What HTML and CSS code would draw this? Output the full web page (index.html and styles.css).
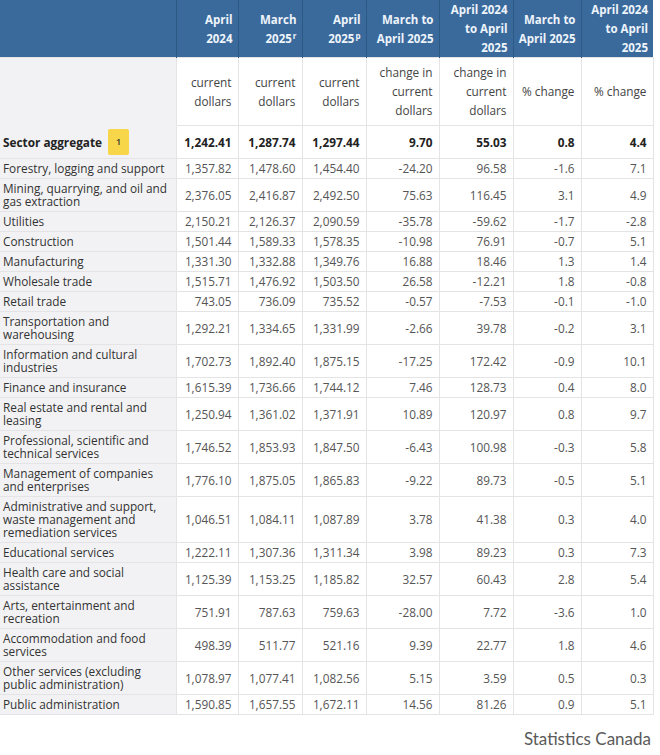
FILE: index.html
```html
<!DOCTYPE html>
<html>
<head>
<meta charset="utf-8">
<link rel="stylesheet" href="styles.css">
</head>
<body>
<table class="data">
  <colgroup>
    <col class="c-label"><col class="c1"><col class="c2"><col class="c3"><col class="c4"><col class="c5"><col class="c6"><col class="c7">
  </colgroup>
  <thead>
    <tr class="head">
      <th class="blank"></th>
      <th>April<br>2024</th>
      <th>March<br>2025<sup>r</sup></th>
      <th>April<br>2025<sup>p</sup></th>
      <th>March to<br>April 2025</th>
      <th>April 2024<br>to April<br>2025</th>
      <th>March to<br>April 2025</th>
      <th>April 2024<br>to April<br>2025</th>
    </tr>
    <tr class="units">
      <td class="label"></td>
      <td>current<br>dollars</td>
      <td>current<br>dollars</td>
      <td>current<br>dollars</td>
      <td>change in<br>current<br>dollars</td>
      <td>change in<br>current<br>dollars</td>
      <td>% change</td>
      <td>% change</td>
    </tr>
  </thead>
  <tbody>
    <tr class="agg">
      <td class="label"><span class="agg-name">Sector aggregate</span><span class="note">1</span></td>
      <td>1,242.41</td><td>1,287.74</td><td>1,297.44</td><td>9.70</td><td>55.03</td><td>0.8</td><td>4.4</td>
    </tr>
    <tr><td class="label">Forestry, logging and support</td><td>1,357.82</td><td>1,478.60</td><td>1,454.40</td><td>-24.20</td><td>96.58</td><td>-1.6</td><td>7.1</td></tr>
    <tr><td class="label">Mining, quarrying, and oil and gas extraction</td><td>2,376.05</td><td>2,416.87</td><td>2,492.50</td><td>75.63</td><td>116.45</td><td>3.1</td><td>4.9</td></tr>
    <tr><td class="label">Utilities</td><td>2,150.21</td><td>2,126.37</td><td>2,090.59</td><td>-35.78</td><td>-59.62</td><td>-1.7</td><td>-2.8</td></tr>
    <tr><td class="label">Construction</td><td>1,501.44</td><td>1,589.33</td><td>1,578.35</td><td>-10.98</td><td>76.91</td><td>-0.7</td><td>5.1</td></tr>
    <tr><td class="label">Manufacturing</td><td>1,331.30</td><td>1,332.88</td><td>1,349.76</td><td>16.88</td><td>18.46</td><td>1.3</td><td>1.4</td></tr>
    <tr><td class="label">Wholesale trade</td><td>1,515.71</td><td>1,476.92</td><td>1,503.50</td><td>26.58</td><td>-12.21</td><td>1.8</td><td>-0.8</td></tr>
    <tr><td class="label">Retail trade</td><td>743.05</td><td>736.09</td><td>735.52</td><td>-0.57</td><td>-7.53</td><td>-0.1</td><td>-1.0</td></tr>
    <tr><td class="label">Transportation and warehousing</td><td>1,292.21</td><td>1,334.65</td><td>1,331.99</td><td>-2.66</td><td>39.78</td><td>-0.2</td><td>3.1</td></tr>
    <tr><td class="label">Information and cultural industries</td><td>1,702.73</td><td>1,892.40</td><td>1,875.15</td><td>-17.25</td><td>172.42</td><td>-0.9</td><td>10.1</td></tr>
    <tr><td class="label">Finance and insurance</td><td>1,615.39</td><td>1,736.66</td><td>1,744.12</td><td>7.46</td><td>128.73</td><td>0.4</td><td>8.0</td></tr>
    <tr><td class="label">Real estate and rental and leasing</td><td>1,250.94</td><td>1,361.02</td><td>1,371.91</td><td>10.89</td><td>120.97</td><td>0.8</td><td>9.7</td></tr>
    <tr><td class="label">Professional, scientific and technical services</td><td>1,746.52</td><td>1,853.93</td><td>1,847.50</td><td>-6.43</td><td>100.98</td><td>-0.3</td><td>5.8</td></tr>
    <tr><td class="label">Management of companies and enterprises</td><td>1,776.10</td><td>1,875.05</td><td>1,865.83</td><td>-9.22</td><td>89.73</td><td>-0.5</td><td>5.1</td></tr>
    <tr><td class="label">Administrative and support, waste management and remediation services</td><td>1,046.51</td><td>1,084.11</td><td>1,087.89</td><td>3.78</td><td>41.38</td><td>0.3</td><td>4.0</td></tr>
    <tr><td class="label">Educational services</td><td>1,222.11</td><td>1,307.36</td><td>1,311.34</td><td>3.98</td><td>89.23</td><td>0.3</td><td>7.3</td></tr>
    <tr><td class="label">Health care and social assistance</td><td>1,125.39</td><td>1,153.25</td><td>1,185.82</td><td>32.57</td><td>60.43</td><td>2.8</td><td>5.4</td></tr>
    <tr><td class="label">Arts, entertainment and recreation</td><td>751.91</td><td>787.63</td><td>759.63</td><td>-28.00</td><td>7.72</td><td>-3.6</td><td>1.0</td></tr>
    <tr><td class="label">Accommodation and food services</td><td>498.39</td><td>511.77</td><td>521.16</td><td>9.39</td><td>22.77</td><td>1.8</td><td>4.6</td></tr>
    <tr><td class="label">Other services (excluding public administration)</td><td>1,078.97</td><td>1,077.41</td><td>1,082.56</td><td>5.15</td><td>3.59</td><td>0.5</td><td>0.3</td></tr>
    <tr><td class="label">Public administration</td><td>1,590.85</td><td>1,657.55</td><td>1,672.11</td><td>14.56</td><td>81.26</td><td>0.9</td><td>5.1</td></tr>
  </tbody>
</table>
<div class="source">Statistics Canada</div>
</body>
</html>
```

FILE: styles.css
```css
html, body {
  margin: 0;
  padding: 0;
  background: #ffffff;
}

body {
  font-family: "Open Sans", "Noto Sans", sans-serif;
  width: 660px;
}

.data {
  border-collapse: collapse;
  table-layout: fixed;
  width: 653px;
  font-size: 11.8px;
  color: #444;
}

.c-label { width: 176px; }
.c1 { width: 62px; }
.c2 { width: 64px; }
.c3 { width: 64px; }
.c4 { width: 73px; }
.c5 { width: 74px; }
.c6 { width: 68px; }
.c7 { width: 72px; }

.head th {
  background: #3a6a9b;
  color: #eef4fb;
  font-size: 11.5px;
  font-weight: 700;
  text-align: right;
  vertical-align: middle;
  white-space: nowrap;
  height: 57px;
  padding: 0 5px 0 3px;
  line-height: 19px;
  border-left: 1px solid #2d5985;
  box-sizing: border-box;
}

.head th.blank {
  border-left: none;
}

.head sup {
  font-size: 8px;
  line-height: 0;
  vertical-align: 4px;
  margin-left: 1px;
}

.units td {
  height: 68px;
  box-sizing: border-box;
  line-height: 19px;
  color: #444;
}

td {
  text-align: right;
  vertical-align: middle;
  padding: 3px 6px 3px 4px;
  line-height: 13px;
  border: 1px solid #e4e4e6;
  background: #fff;
}

td.label {
  text-align: left;
  background: #f2f2f4;
  color: #333;
  padding-left: 3px;
  border-left: none;
  border-right: none;
}

.units td.label {
  border-bottom-color: #f2f2f4;
}

tbody td {
  color: #555;
}

tbody td.label {
  color: #333;
}

.agg td {
  font-weight: 700;
  color: #222;
  height: 32px;
  box-sizing: border-box;
}

.agg td.label {
  color: #222;
}

.agg-name {
  vertical-align: middle;
}

.note {
  display: inline-block;
  vertical-align: middle;
  margin-left: 6px;
  width: 21px;
  height: 26px;
  line-height: 26px;
  text-align: center;
  background: #f7d64a;
  border-radius: 2px;
  font-size: 9px;
  font-weight: 600;
  color: #333;
}

.source {
  width: 651px;
  text-align: right;
  margin-top: 13px;
  font-family: "Lato", "Open Sans", sans-serif;
  font-size: 17px;
  color: #5a5a5a;
}
```
